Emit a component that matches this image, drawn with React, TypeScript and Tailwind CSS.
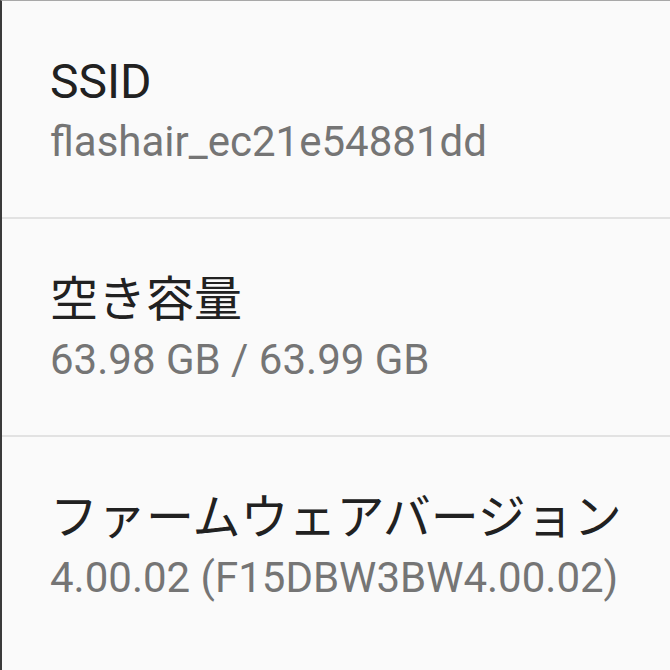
const items = [
  { title: "SSID", value: "flashair_ec21e54881dd" },
  { title: "空き容量", value: "63.98 GB / 63.99 GB" },
  { title: "ファームウェアバージョン", value: "4.00.02 (F15DBW3BW4.00.02)" },
];

function InfoRow({ title, value, last }: { title: string; value: string; last?: boolean }) {
  return (
    <div
      className={`pl-[48px] pt-[53px] ${
        last ? "h-[240px]" : "h-[218px] border-b-2 border-[#e2e2e2]"
      }`}
    >
      <div className="text-[48px] leading-[56px] text-[#212121]">{title}</div>
      <div className="mt-[8px] text-[42px] leading-[48px] text-[#757575]">{value}</div>
    </div>
  );
}

export default function App() {
  return (
    <div
      className="h-[670px] w-[670px] overflow-hidden bg-[#fafafa] border-l-2 border-t border-l-[#3a3a3a] border-t-[#a8a8a8]"
      style={{ fontFamily: 'Roboto, "Noto Sans CJK JP", sans-serif' }}
    >
      {items.map((item, i) => (
        <InfoRow key={item.title} title={item.title} value={item.value} last={i === items.length - 1} />
      ))}
    </div>
  );
}
